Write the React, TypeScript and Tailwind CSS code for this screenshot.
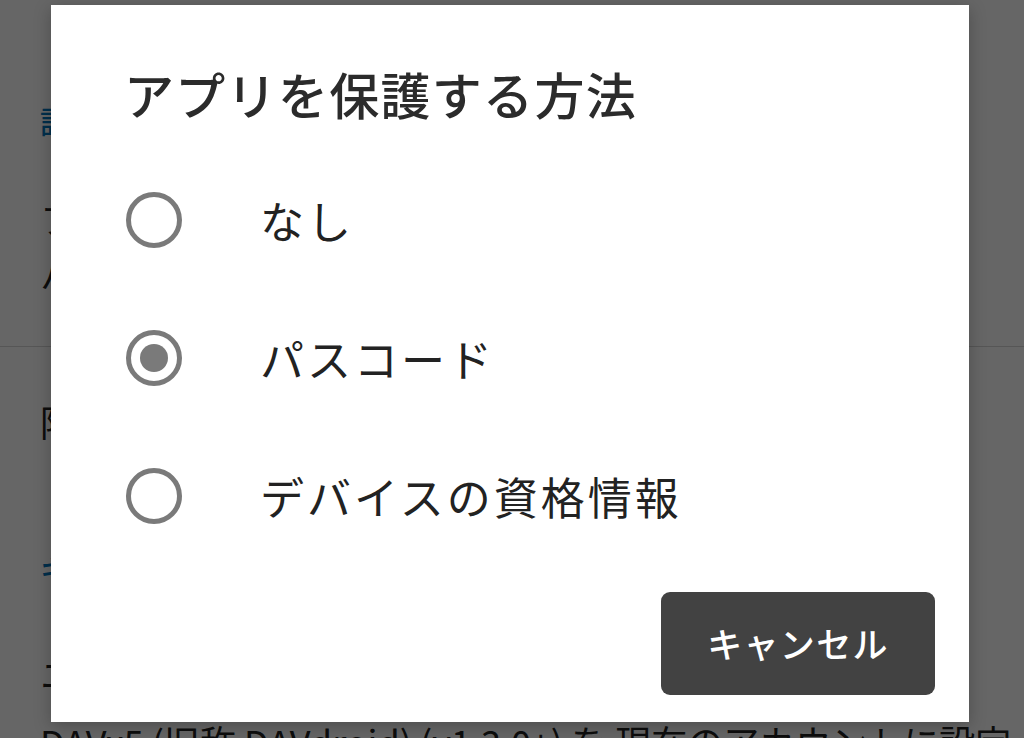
import React from "react";

const jp = { fontFamily: '"Noto Sans CJK JP", "Noto Sans", sans-serif' };

function Radio({ checked }: { checked?: boolean }) {
  return (
    <div className="w-[56px] h-[56px] rounded-full border-[5px] border-[#7a7a7a] flex items-center justify-center shrink-0">
      {checked && <div className="w-[28px] h-[28px] rounded-full bg-[#7a7a7a]" />}
    </div>
  );
}

export default function App() {
  const options = [
    { label: "なし", checked: false },
    { label: "パスコード", checked: true },
    { label: "デバイスの資格情報", checked: false },
  ];
  return (
    <div className="relative w-[1024px] h-[738px] overflow-hidden bg-white" style={jp}>
      {/* underlying settings page */}
      <div className="flex flex-col pl-[40px] text-[#212121]">
        <div className="h-[90px]" />
        <div className="h-[60px] flex items-center text-[30px] font-medium text-[#0277bd]">設定</div>
        <div className="h-[40px]" />
        <div className="h-[56px] flex items-center text-[36px]">フォ</div>
        <div className="h-[56px] flex items-center text-[36px]">ハイ</div>
        <div className="h-[44px]" />
        <div className="h-[1px] bg-[#d6d6d6] -ml-[40px]" />
        <div className="h-[46px]" />
        <div className="h-[56px] flex items-center text-[36px]">限定</div>
        <div className="h-[94px]" />
        <div className="h-[50px] flex items-center text-[30px] font-medium text-[#0277bd]">キャ</div>
        <div className="h-[52px]" />
        <div className="h-[56px] flex items-center text-[36px]">ニュ</div>
        <div className="h-[12px]" />
        <div className="h-[56px] flex items-center text-[36px] whitespace-nowrap">DAVx5 (旧称 DAVdroid) (v1.3.0+) を 現在のアカウントに設定</div>
      </div>

      {/* scrim */}
      <div className="absolute inset-0 bg-black/60" />

      {/* dialog */}
      <div className="absolute left-[51px] top-[5px] w-[918px] h-[717px] bg-white flex flex-col shadow-[0_4px_16px_rgba(0,0,0,0.25)]">
        <div className="pt-[63px] pl-[73px] text-[50px] leading-[50px] font-medium text-[#2b2b2b] tracking-[1.3px] whitespace-nowrap">
          アプリを保護する方法
        </div>
        <div className="mt-[33px] flex flex-col">
          {options.map((o) => (
            <div key={o.label} className="h-[138px] flex items-center pl-[75px] gap-[78px]">
              <Radio checked={o.checked} />
              <span className="text-[44px] leading-[44px] text-[#222222] tracking-[3px] whitespace-nowrap">{o.label}</span>
            </div>
          ))}
        </div>
        <div className="mt-[27px] flex justify-end pr-[34px]">
          <button className="w-[274px] h-[103px] rounded-[9px] bg-[#424242] text-white text-[35px] font-medium tracking-[1.3px] flex items-center justify-center">
            キャンセル
          </button>
        </div>
      </div>
    </div>
  );
}
